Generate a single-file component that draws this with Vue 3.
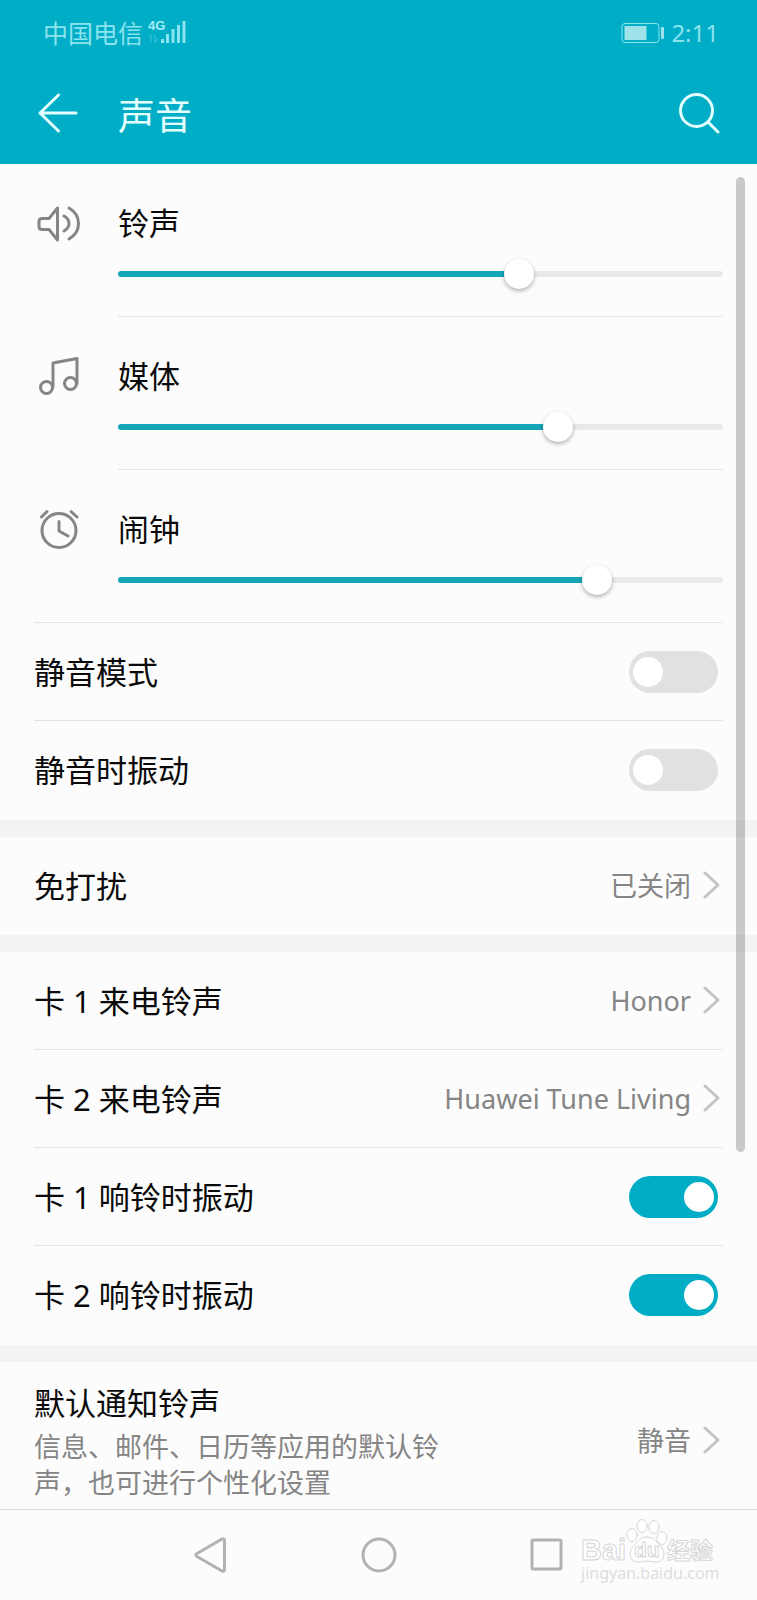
<script setup>
import { reactive } from 'vue'

const volumes = reactive([
  { id: 'ring', label: '铃声', value: 671 },
  { id: 'media', label: '媒体', value: 739 },
  { id: 'alarm', label: '闹钟', value: 807 },
])

const silent = reactive([
  { id: 'silent', label: '静音模式', on: false },
  { id: 'silent-vibrate', label: '静音时振动', on: false },
])

const ringtones = [
  { label: '卡 1 来电铃声', value: 'Honor' },
  { label: '卡 2 来电铃声', value: 'Huawei Tune Living' },
]

const vibrate = reactive([
  { id: 'sim1-vibrate', label: '卡 1 响铃时振动', on: true },
  { id: 'sim2-vibrate', label: '卡 2 响铃时振动', on: true },
])
</script>

<template>
  <div class="screen">
    <header class="header">
      <div class="status">
        <div class="carrier">
          <span>中国电信</span>
          <svg class="signal" width="40" height="26" viewBox="0 0 40 26" aria-hidden="true">
            <text x="1" y="12" class="net">4G</text>
            <path d="M4 17v7M2 19l2-2M8 17v7M8 24l3-3" class="data" />
            <path d="M15.500 25v-4M20.500 25v-9M26 25v-14M31.500 25v-18M37 25v-22" class="bars" />
          </svg>
        </div>
        <div class="clock">
          <svg width="44" height="22" viewBox="0 0 44 22" aria-hidden="true">
            <rect x="1" y="1.500" width="37" height="19" rx="3" class="cell" />
            <rect x="3.500" y="4" width="22" height="14" class="charge" />
            <rect x="40" y="5" width="3" height="12" rx="1" class="charge" />
          </svg>
          <span>2:11</span>
        </div>
      </div>
      <div class="bar">
        <button class="icon-btn back" type="button" aria-label="返回">
          <svg width="42" height="42" viewBox="0 0 42 42">
            <path d="M39 21H3M21.500 3L3 21l18.500 18" />
          </svg>
        </button>
        <h1>声音</h1>
        <button class="icon-btn" type="button" aria-label="搜索">
          <svg width="42" height="42" viewBox="0 0 42 42">
            <circle cx="18.500" cy="18.500" r="16" />
            <path d="M30 30l10 10" />
          </svg>
        </button>
      </div>
    </header>

    <main class="content">
      <section>
        <div v-for="v in volumes" :key="v.id" class="volume">
          <svg class="vol-icon" width="48" height="44" viewBox="0 0 48 44" aria-hidden="true">
            <template v-if="v.id === 'ring'">
              <path d="M8 16.500H15L23.500 6V38L15 27.500H8Q5 27.500 5 24.500V19.500Q5 16.500 8 16.500Z" />
              <path d="M30 14Q35 17 35 21.500T30 29M35 6Q44.500 11.500 44.500 21.500T35 37" />
            </template>
            <template v-else-if="v.id === 'media'">
              <circle cx="12.500" cy="32.500" r="6" />
              <circle cx="36.500" cy="28.500" r="6" />
              <path d="M19 32V8L43 3.500V28.500" />
            </template>
            <template v-else>
              <circle cx="25" cy="22.500" r="17" />
              <path d="M25 13.500V23L34 28M7.500 9L13 3.500M37 3.500L43 9" />
            </template>
          </svg>
          <div class="vol-body">
            <label :for="v.id">{{ v.label }}</label>
            <input
              :id="v.id"
              v-model.number="v.value"
              type="range"
              min="0"
              max="1000"
              :style="{ '--level': v.value / 1000 }"
            />
          </div>
        </div>
        <div class="list">
          <div v-for="s in silent" :key="s.id" class="row">
            <label class="name" :for="s.id">{{ s.label }}</label>
            <input :id="s.id" v-model="s.on" class="switch" type="checkbox" role="switch" />
          </div>
        </div>
      </section>

      <section>
        <button class="row" type="button">
          <span class="name">免打扰</span>
          <span class="value">已关闭</span>
          <svg class="chevron" width="18" height="30" viewBox="0 0 18 30"><path d="M2 3l13 12L2 27" /></svg>
        </button>
      </section>

      <section class="list">
        <button v-for="r in ringtones" :key="r.label" class="row" type="button">
          <span class="name">{{ r.label }}</span>
          <span class="value">{{ r.value }}</span>
          <svg class="chevron" width="18" height="30" viewBox="0 0 18 30"><path d="M2 3l13 12L2 27" /></svg>
        </button>
        <div v-for="s in vibrate" :key="s.id" class="row">
          <label class="name" :for="s.id">{{ s.label }}</label>
          <input :id="s.id" v-model="s.on" class="switch" type="checkbox" role="switch" />
        </div>
      </section>

      <section>
        <button class="row detailed" type="button">
          <span class="name">
            默认通知铃声
            <span class="desc">信息、邮件、日历等应用的默认铃声，也可进行个性化设置</span>
          </span>
          <span class="value">静音</span>
          <svg class="chevron" width="18" height="30" viewBox="0 0 18 30"><path d="M2 3l13 12L2 27" /></svg>
        </button>
      </section>
      <div class="scrollbar" aria-hidden="true"></div>
    </main>

    <nav class="nav">
      <button type="button" aria-label="后退">
        <svg width="38" height="38" viewBox="0 0 38 38"><path d="M6 17.500L31 3Q33.500 2 33.500 5V33Q33.500 36 31 35L6 20.500Q3.500 19 6 17.500Z" /></svg>
      </button>
      <button type="button" aria-label="主屏幕">
        <svg width="38" height="38" viewBox="0 0 38 38"><circle cx="19" cy="19" r="16" /></svg>
      </button>
      <button type="button" aria-label="最近任务">
        <svg width="38" height="38" viewBox="0 0 38 38"><rect x="4" y="4" width="29" height="29" rx="1" /></svg>
      </button>
      <svg class="watermark" width="140" height="70" viewBox="0 0 140 70">
        <text x="1" y="44" class="wm-latin">Bai</text>
        <ellipse cx="52" cy="19" rx="5" ry="6.500" />
        <ellipse cx="62" cy="10" rx="5" ry="6.500" />
        <ellipse cx="74" cy="11" rx="5" ry="6.500" />
        <ellipse cx="82" cy="22" rx="5" ry="6.500" />
        <path d="M67 21C59 21 57 27 53 31C48 35 49 46 58 46C62 46 64 45 67 45S73 46 76 46C85 46 86 36 81 31C77 27 75 21 67 21Z" />
        <text x="54" y="41" class="wm-du">du</text>
        <text x="87" y="43" class="wm-cjk">经验</text>
        <text x="1" y="63" class="wm-url">jingyan.baidu.com</text>
      </svg>
    </nav>
  </div>
</template>

<style>
body {
  background: #fcfcfc;
}
</style>

<style scoped>
.screen {
  display: flex;
  flex-direction: column;
  min-height: 100vh;
  color: #0a0a0a;
  background: #fcfcfc;
  font-family: "Noto Sans", "Noto Sans CJK SC", sans-serif;
  font-size: 31px;
  line-height: 44px;
}
button {
  margin: 0;
  padding: 0;
  border: 0;
  background: none;
  color: inherit;
  font: inherit;
  text-align: left;
}
svg {
  display: block;
  flex: none;
  fill: none;
  stroke-linecap: round;
  stroke-linejoin: round;
}

/* header */
.header {
  background: #00adc6;
  color: #e4ffff;
}
.status {
  display: flex;
  justify-content: space-between;
  align-items: center;
  height: 66px;
  padding: 0 38px 0 43px;
  color: #8ae4ee;
  font-size: 25px;
}
.carrier,
.clock {
  display: flex;
  align-items: center;
  gap: 4px;
}
.clock {
  gap: 6px;
  font-size: 24px;
}
.signal {
  margin-bottom: 4px;
}
.net {
  fill: #a4edf4;
  font: bold 13px "Liberation Sans Narrow", "Liberation Sans", sans-serif;
}
.data {
  stroke: #45c5d6;
  stroke-width: 1;
}
.bars {
  stroke: #8ae4ee;
  stroke-width: 3;
  stroke-linecap: butt;
}
.cell {
  stroke: #8ae4ee;
}
.charge {
  fill: #9fe2ea;
}
.bar {
  display: flex;
  align-items: center;
  height: 98px;
  padding: 0 37px;
}
.back {
  margin-right: 39px;
}
.icon-btn svg {
  margin-bottom: 4px;
  stroke: #e4ffff;
  stroke-width: 3;
}
h1 {
  flex: 1;
  margin: 0;
  padding-top: 2px;
  font-size: 37px;
  font-weight: 400;
}

/* volume sliders */
.content {
  position: relative;
  flex: 1;
}
.content > section + section {
  border-top: 17px solid #f3f3f3;
}
.volume {
  display: flex;
  padding: 0 34px;
}
.vol-icon {
  margin: 38px 36px 0 0;
  stroke: #858585;
  stroke-width: 3;
}
.vol-body {
  display: flex;
  flex: 1;
  flex-direction: column;
  padding: 37px 0 27px;
  border-bottom: 1px solid #e4e4e4;
}
.volume:nth-child(3) {
  margin: 0 34px;
  padding: 0;
  border-bottom: 1px solid #e4e4e4;
}
.volume:nth-child(3) .vol-body {
  border-bottom: 0;
}
input[type="range"] {
  --fill: calc(15px + (100% - 30px) * var(--level));
  width: 100%;
  height: 30px;
  margin: 14px 0 0;
  appearance: none;
  background: none;
}
input[type="range"]::-webkit-slider-runnable-track {
  height: 6px;
  border-radius: 3px;
  background: linear-gradient(to right, #14a6b8 var(--fill), #e9e9e9 var(--fill));
}
input[type="range"]::-webkit-slider-thumb {
  width: 30px;
  height: 30px;
  margin-top: -12px;
  appearance: none;
  border-radius: 50%;
  background: #fff;
  box-shadow: 0 2px 4px rgba(0, 0, 0, 0.3);
}

/* settings rows */
.list {
  padding-bottom: 1px;
}
.row {
  display: flex;
  align-items: center;
  box-sizing: border-box;
  width: calc(100% - 68px);
  min-height: 98px;
  margin: 0 34px;
}
.list .row:not(:last-child) {
  border-bottom: 1px solid #e4e4e4;
}
.name {
  flex: 1;
}
.value {
  color: #858585;
  font-size: 27px;
}
.chevron {
  margin: 0 2px 2px 12px;
  stroke: #c3c3c3;
  stroke-width: 3;
}
.detailed {
  padding: 19px 0 8px;
}
.desc {
  display: block;
  max-width: 420px;
  margin-top: 4px;
  color: #858585;
  font-size: 27px;
  line-height: 36px;
}
.switch {
  width: 89px;
  height: 42px;
  margin: 0 5px 0 0;
  padding: 6px 4px;
  box-sizing: border-box;
  appearance: none;
  border-radius: 21px;
  background: #e1e1e1;
}
.switch::before {
  content: "";
  display: block;
  width: 30px;
  height: 30px;
  border-radius: 50%;
  background: #fff;
}
.switch:checked {
  background: #00adc4;
}
.switch:checked::before {
  margin-left: auto;
}
.scrollbar {
  position: absolute;
  top: 13px;
  right: 12px;
  width: 9px;
  height: 72.5%;
  border-radius: 5px;
  background: rgba(0, 0, 0, 0.2);
}

/* navigation bar */
.nav {
  position: relative;
  display: grid;
  grid-template-columns: repeat(3, 1fr);
  height: 90px;
  padding: 0 16.6%;
  border-top: 1px solid #dcdcdc;
}
.nav button {
  display: grid;
  place-items: center;
}
.nav button svg {
  stroke: #b2b2b2;
  stroke-width: 3;
}
.watermark {
  position: absolute;
  top: 6px;
  right: 37px;
  fill: #fff;
  stroke: #d6d6d6;
  stroke-width: 1;
}
.wm-latin {
  font: bold 29px "Liberation Sans", sans-serif;
}
.wm-du {
  font: bold 21px "Liberation Sans", sans-serif;
}
.wm-cjk {
  font: bold 23px "Noto Sans CJK SC", sans-serif;
}
.wm-url {
  fill: #dedede;
  stroke: none;
  font: 16px "Noto Sans", sans-serif;
}
</style>
